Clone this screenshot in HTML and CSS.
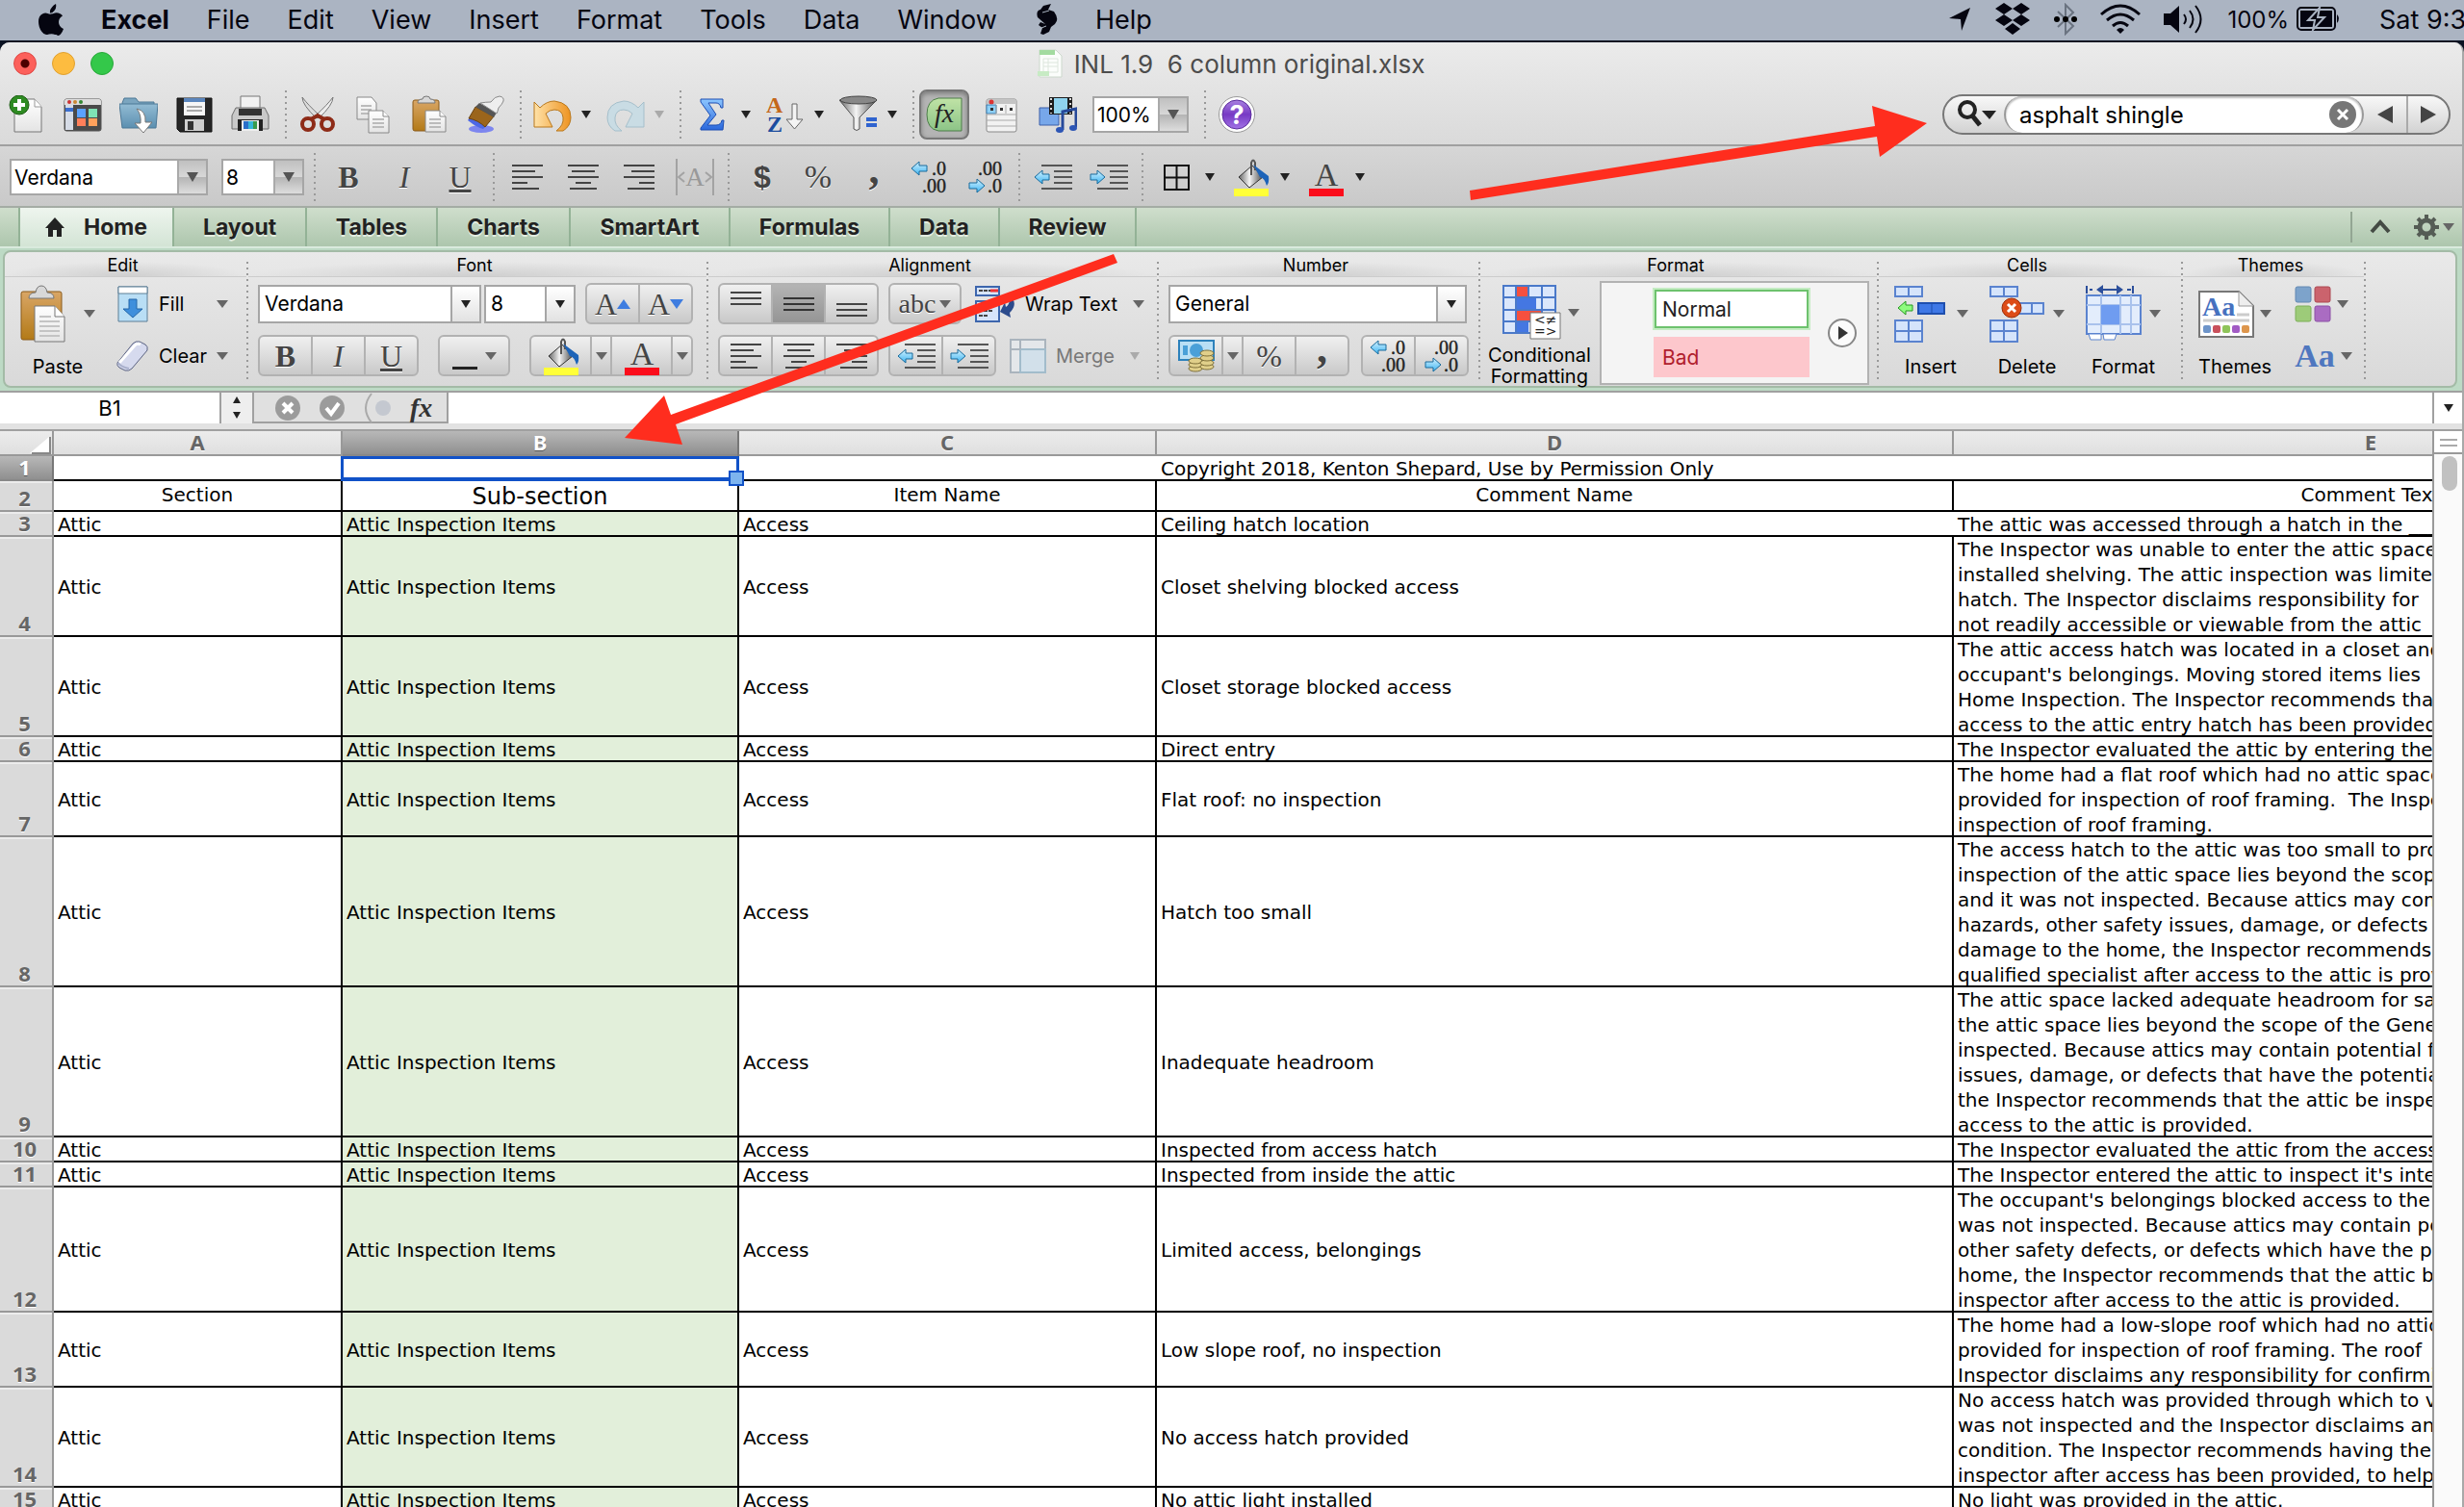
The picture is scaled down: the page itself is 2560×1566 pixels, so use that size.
FILE: index.html
```html
<!DOCTYPE html>
<html lang="en">
<head>
<meta charset="utf-8">
<title>INL 1.9  6 column original.xlsx</title>
<link rel="stylesheet" href="styles.css">
</head>
<body>
<svg class="defs" aria-hidden="true">
  <defs>
    <linearGradient id="g-page" x1="0" y1="0" x2="0" y2="1"><stop offset="0" stop-color="#fff"/><stop offset="1" stop-color="#e4e4e4"/></linearGradient>
    <linearGradient id="g-folder" x1="0" y1="0" x2="0" y2="1"><stop offset="0" stop-color="#93bcd4"/><stop offset="1" stop-color="#5b8fb0"/></linearGradient>
    <linearGradient id="g-board" x1="0" y1="0" x2="0" y2="1"><stop offset="0" stop-color="#d9a666"/><stop offset="1" stop-color="#b37a17"/></linearGradient>
    <linearGradient id="g-undo" x1="0" y1="0" x2="1" y2="0"><stop offset="0" stop-color="#ffe2a8"/><stop offset="1" stop-color="#ee9320"/></linearGradient>
    <linearGradient id="g-blue" x1="0" y1="0" x2="0" y2="1"><stop offset="0" stop-color="#8cc6ff"/><stop offset="1" stop-color="#2b68dc"/></linearGradient>
    <linearGradient id="g-metal" x1="0" y1="0" x2="1" y2="0"><stop offset="0" stop-color="#666"/><stop offset=".45" stop-color="#f4f4f4"/><stop offset="1" stop-color="#4c4c4c"/></linearGradient>
    <linearGradient id="g-green" x1="0" y1="0" x2="0" y2="1"><stop offset="0" stop-color="#c0e3a6"/><stop offset="1" stop-color="#8cc487"/></linearGradient>
    <linearGradient id="g-purple" x1="0" y1="0" x2="0" y2="1"><stop offset="0" stop-color="#a982e0"/><stop offset=".5" stop-color="#7739c4"/><stop offset="1" stop-color="#a274e6"/></linearGradient>
    <linearGradient id="g-arrow" x1="0" y1="0" x2="0" y2="1"><stop offset="0" stop-color="#d6f3ff"/><stop offset="1" stop-color="#3cb4f2"/></linearGradient>
  </defs>

  <symbol id="i-new" viewBox="0 0 40 40"><path d="M7 4h21l7 8v26H7z" fill="url(#g-page)" stroke="#777"/><path d="M28 4v8h7" fill="#fff" stroke="#999"/><circle cx="12" cy="10" r="10" fill="#2e8b22" stroke="#1d5c14"/><path d="M12 4v12M6 10h12" stroke="#fff" stroke-width="4"/></symbol>
  <symbol id="i-gallery" viewBox="0 0 40 40"><rect x="1" y="4" width="38" height="33" rx="2" fill="#4a4a4a" stroke="#555"/><path d="M1 10V6q0-2 2-2h34q2 0 2 2v4z" fill="#ddd"/><circle cx="6" cy="7" r="2" fill="#c33"/><circle cx="12" cy="7" r="2" fill="#c83"/><circle cx="18" cy="7" r="2" fill="#383"/><path d="M2 10h8v26H2z" fill="#d5dbe6"/><path d="M2 13h8v4H2z" fill="#3b6fd0"/><path d="M14 14h9v9h-9z" fill="#5ba2ff"/><path d="M26 14h9v9h-9z" fill="#7fe3b4"/><path d="M14 24h9v8h-9z" fill="#ff7f5a"/><path d="M26 24h9v8h-9z" fill="#ffa15c"/></symbol>
  <symbol id="i-open" viewBox="0 0 40 40"><path d="M3 8l2-5h12l3 4h16v6H3z" fill="#7ba5bf" stroke="#4c7896"/><path d="M0 9h40l-2 25H3z" fill="url(#g-folder)" stroke="#4c7896"/><path d="M18 14q10 2 9 14h7l-9 11-9-10h6q1-9-4-15z" fill="#fff" stroke="#777"/></symbol>
  <symbol id="i-save" viewBox="0 0 40 40"><path d="M2 3h36v35H5l-3-3z" fill="#262626" stroke="#111"/><path d="M9 3h22v18H9z" fill="#f6f6f6"/><path d="M9 3h22v4H9z" fill="#5b86bd"/><path d="M12 12h16M12 16h16" stroke="#aaa" stroke-width="2"/><path d="M10 25h20v12H10z" fill="#cfcfcf"/><path d="M13 27h6v9h-6z" fill="#333"/></symbol>
  <symbol id="i-print" viewBox="0 0 40 40"><path d="M10 1h20v14H10z" fill="#f2f2f2" stroke="#777"/><path d="M5 13h30l4 8v14H1V21z" fill="#c9c9c9" stroke="#6d6d6d"/><path d="M8 14h24v7H8z" fill="#333"/><path d="M7 25h26v12H7z" fill="#222"/><path d="M11 26h18v11H11z" fill="#eee"/><path d="M13 27h5v8h-5z" fill="#2a6fc9"/><path d="M18 27h5v8h-5z" fill="#35b5d8"/><path d="M23 27h4v8h-4z" fill="#3a9a4c"/></symbol>
  <symbol id="i-cut" viewBox="0 0 40 40"><path d="M4 2q0 8 15 22l3-3Q10 10 4 2z" fill="#ddd" stroke="#777"/><path d="M36 2q0 8-15 22l-3-3Q30 10 36 2z" fill="#eee" stroke="#777"/><ellipse cx="10" cy="30" rx="6" ry="6" fill="none" stroke="#8e2b17" stroke-width="4"/><ellipse cx="30" cy="30" rx="6" ry="6" fill="none" stroke="#8e2b17" stroke-width="4"/><path d="M13 25l7-4 7 4" fill="none" stroke="#8e2b17" stroke-width="4"/></symbol>
  <symbol id="i-copy" viewBox="0 0 40 40"><path d="M3 2h15l5 6v17H3z" fill="url(#g-page)" stroke="#888"/><path d="M7 11h11M7 15h11M7 19h8" stroke="#bbb" stroke-width="2"/><path d="M15 16h15l6 6v17H15z" fill="url(#g-page)" stroke="#888"/><path d="M30 16v6h6" fill="#fff" stroke="#888"/><path d="M19 25h12M19 29h12M19 33h12" stroke="#bbb" stroke-width="2"/></symbol>
  <symbol id="i-paste" viewBox="0 0 40 40"><rect x="3" y="5" width="27" height="32" rx="2" fill="url(#g-board)" stroke="#8a5a1a"/><path d="M8 8q0-4 5-4 0-3 4-3t4 3q5 0 5 4z" fill="#d8d8d8" stroke="#777"/><path d="M16 16h15l6 6v16H16z" fill="url(#g-page)" stroke="#888"/><path d="M31 16v6h6" fill="#fff" stroke="#888"/><path d="M20 25h12M20 29h12M20 33h12" stroke="#bbb" stroke-width="2"/></symbol>
  <symbol id="i-brush" viewBox="0 0 40 40"><ellipse cx="16" cy="35" rx="13" ry="4" fill="#7d86ef"/><path d="M2 26q10 8 16 9l4-4L6 20z" fill="#4d68e6"/><path d="M10 12l-7 12q10 2 17 9l9-11z" fill="#9b651c" stroke="#6b430e"/><path d="M10 12l4-4 18 10-3 5z" fill="#555"/><path d="M15 8q6-1 11-1 4-6 9-6 5 1 4 5-1 3-5 7-1 4-2 6z" fill="#eee" stroke="#888"/></symbol>
  <symbol id="i-undo" viewBox="0 0 40 40"><path d="M1 7l6 6Q14 6 22 6q17 2 17 17 0 9-8 14h-7q8-6 7-14-1-8-9-8-5 0-9 4l7 14H1z" fill="url(#g-undo)" stroke="#b9781c"/></symbol>
  <symbol id="i-redo" viewBox="0 0 40 40"><path d="M39 7l-6 6Q26 6 18 6 1 8 1 23q0 9 8 14h7q-8-6-7-14 1-8 9-8 5 0 9 4l-7 14h19z" fill="#c9dce4" stroke="#a5bfcb"/></symbol>
  <symbol id="i-sum" viewBox="0 0 40 40"><path d="M8 4h23v9h-2q-1-5-5-5h-8l8 12-9 11h9q5 0 6-5h2l-1 10H8v-2l10-13L8 7z" fill="url(#g-blue)" stroke="#1c4db2"/></symbol>
  <symbol id="i-filter" viewBox="0 0 40 40"><path d="M0 5l15 18v12q3 3 6 0V23L39 5z" fill="url(#g-metal)" stroke="#555"/><ellipse cx="20" cy="5" rx="19" ry="4" fill="#888" stroke="#444"/><path d="M28 23h11v4H28zM28 29h11v4H28z" fill="#2f63cf"/></symbol>
  <symbol id="i-toolbox" viewBox="0 0 40 40"><rect x="2" y="4" width="31" height="34" rx="2" fill="#f2f2f2" stroke="#888"/><path d="M2 9V6q0-2 2-2h27q2 0 2 2v3z" fill="#c4c4c4"/><circle cx="7" cy="7" r="2.500" fill="#d33"/><path d="M2 10h10v9H2z" fill="#8fd0f6" stroke="#3b7db0"/><path d="M12 10v9M22 10v9M2 20h31M2 26h31M2 32h31" stroke="#aaa"/><path d="M6 13h3v3H6zM16 13h3v3h-3zM26 13h3v3h-3z" fill="#333"/></symbol>
  <symbol id="i-media" viewBox="0 0 40 40"><path d="M1 13h20v18H1z" fill="#77a7ea" stroke="#3c5fa8"/><path d="M11 2h24v18H11z" fill="#1d1d1d"/><path d="M16 3h14v16H16z" fill="#8fd3ee"/><path d="M13 3v16M33 3v16" stroke="#ddd" stroke-width="2" stroke-dasharray="2 3"/><path d="M25 36V17l14-3v19" fill="none" stroke="#26499a" stroke-width="3"/><ellipse cx="22" cy="36" rx="4" ry="3" fill="#2c55b5"/><ellipse cx="36" cy="34" rx="4" ry="3" fill="#2c55b5"/></symbol>

  <symbol id="i-left" viewBox="0 0 32 32"><path d="M0 4h32M0 10h24M0 16h32M0 22h16M0 28h28" stroke="#444" stroke-width="2"/></symbol>
  <symbol id="i-center" viewBox="0 0 32 32"><path d="M0 4h32M4 10h24M0 16h32M8 22h16M2 28h28" stroke="#444" stroke-width="2"/></symbol>
  <symbol id="i-right" viewBox="0 0 32 32"><path d="M0 4h32M8 10h24M0 16h32M16 22h16M4 28h28" stroke="#444" stroke-width="2"/></symbol>
  <symbol id="i-top" viewBox="0 0 32 32"><path d="M0 4h32M0 10h32M0 16h32" stroke="#444" stroke-width="2"/></symbol>
  <symbol id="i-middle" viewBox="0 0 32 32"><path d="M0 10h32M0 16h32M0 22h32" stroke="#333" stroke-width="2"/></symbol>
  <symbol id="i-bottom" viewBox="0 0 32 32"><path d="M0 16h32M0 22h32M0 28h32" stroke="#444" stroke-width="2"/></symbol>
  <symbol id="i-outdent" viewBox="0 0 40 32"><path d="M8 4h32M21 10h19M21 16h19M21 22h19M8 28h32" stroke="#555" stroke-width="2"/><path d="M1 16l8-7v4h7v6H9v4z" fill="url(#g-arrow)" stroke="#186a9c"/></symbol>
  <symbol id="i-indent" viewBox="0 0 40 32"><path d="M8 4h32M21 10h19M21 16h19M21 22h19M8 28h32" stroke="#555" stroke-width="2"/><path d="M16 16L8 9v4H1v6h7v4z" fill="url(#g-arrow)" stroke="#186a9c"/></symbol>
  <symbol id="i-borders" viewBox="0 0 40 40"><path d="M8 8h25v25H8zM20.500 8v25M8 20.500h25" fill="none" stroke="#111" stroke-width="2"/></symbol>
  <symbol id="i-bucket" viewBox="0 0 40 40"><path d="M2 32h36v8H2z" fill="#ffff38"/><path d="M7 20L21 8l11 12-14 11z" fill="url(#g-metal)" stroke="#333"/><path d="M20 18V5q2-5 4 0v8" fill="none" stroke="#555" stroke-width="2"/><path d="M22 7l16 12q1 7-2 10-2-8-7-9z" fill="#1c63b8"/></symbol>

  <symbol id="i-clip" viewBox="0 0 48 60"><rect x="1" y="7" width="42" height="50" rx="2" fill="url(#g-board)" stroke="#8a5a1a"/><path d="M9 14q0-6 7-6 1-7 6-7t6 7q7 0 7 6z" fill="#d8d8d8" stroke="#777"/><path d="M15 22h21l10 11v26H15z" fill="url(#g-page)" stroke="#777"/><path d="M36 22v11h10" fill="#fff" stroke="#777"/><path d="M20 33h12M20 38h21M20 43h21M20 48h21M20 53h21" stroke="#c4c4c4" stroke-width="2"/></symbol>
  <symbol id="i-fill" viewBox="0 0 34 38"><path d="M2 1h30v36H2z" fill="#b9def5" stroke="#5c7f96"/><path d="M2 1h30v7H2z" fill="#fff" stroke="#5c7f96"/><path d="M13 14h8v10h6L17 33 7 24h6z" fill="#3f8fdc" stroke="#2566a8"/></symbol>
  <symbol id="i-eraser" viewBox="0 0 34 38"><path d="M1 26L17 6q3-3 7-2l6 3q3 2 2 6L16 32q-3 3-7 2l-6-3q-3-2-2-5z" fill="#d6daee" stroke="#5b6381"/><path d="M3 26L19 8q3-3 6-1" fill="none" stroke="#fff" stroke-width="3"/><path d="M2 26q2 4 11 6" fill="none" stroke="#a9b0cc" stroke-width="2"/></symbol>
  <symbol id="i-wrap" viewBox="0 0 42 40"><path d="M1 2h24v9H1zM1 17h24v21H1z" fill="#d7e5fa" stroke="#3d66ad" stroke-width="2"/><path d="M4 6h12M4 27h14M4 32h10" stroke="#444" stroke-width="2" stroke-dasharray="4 1"/><path d="M16 6h8" stroke="#e33" stroke-width="3"/><path d="M33 9q14 9 3 20l1 5-11-6 5-10 1 5q7-5 1-14z" fill="#2c4b8c"/></symbol>
  <symbol id="i-merge" viewBox="0 0 38 38"><path d="M1 2h36v34H1z" fill="#e4e7ea" stroke="#aab4bd" stroke-width="2"/><path d="M11 12h26v24H11z" fill="#d2e0ea" stroke="#a2bccb" stroke-width="2"/><path d="M11 2v10M1 12h10" stroke="#aab4bd" stroke-width="2"/></symbol>
  <symbol id="i-money" viewBox="0 0 40 36"><path d="M2 2h36v20H2z" fill="#b9dff5" stroke="#2c81bb" stroke-width="2"/><circle cx="20" cy="12" r="7" fill="#4aa0d8"/><path d="M6 7h5v10H6z" fill="#4aa0d8"/><g fill="#e0cf8a" stroke="#80713a"><ellipse cx="19" cy="31" rx="7" ry="3"/><ellipse cx="19" cy="27" rx="7" ry="3"/><ellipse cx="19" cy="23" rx="7" ry="3"/><ellipse cx="31" cy="29" rx="7" ry="3"/><ellipse cx="31" cy="25" rx="7" ry="3"/><ellipse cx="31" cy="20" rx="7" ry="3"/><ellipse cx="31" cy="15" rx="7" ry="3"/></g></symbol>
  <symbol id="i-insert" viewBox="0 0 58 60"><path d="M2 2h28v10H2zM2 37h28v22H2z" fill="#d5e4fb" stroke="#5a83cf" stroke-width="2"/><path d="M16 2v10M16 37v22M2 48h28" stroke="#5a83cf" stroke-width="2"/><path d="M26 19h27v11H26z" fill="#3f78e6" stroke="#1f4fae" stroke-width="2"/><path d="M40 19v11" stroke="#1f4fae"/><path d="M5 24l8-7v4h7v6h-7v4z" fill="#8dfb7d" stroke="#279a22"/></symbol>
  <symbol id="i-delete" viewBox="0 0 58 60"><path d="M1 2h28v10H1zM1 37h28v22H1zM30 19h26v11H30z" fill="#d5e4fb" stroke="#5a83cf" stroke-width="2"/><path d="M15 2v10M15 37v22M1 48h28M44 19v11" stroke="#5a83cf" stroke-width="2"/><circle cx="23" cy="24" r="10" fill="#dd4c17" stroke="#9b2c06"/><path d="M19 20l8 8M27 20l-8 8" stroke="#fff" stroke-width="3"/></symbol>
  <symbol id="i-format" viewBox="0 0 58 60"><path d="M1 11h56v40H1z" fill="#e3edfc" stroke="#5a83cf" stroke-width="2"/><path d="M16 11v40M36 11v40M47 11v40M1 21h56M1 41h56" stroke="#a9c2ec" stroke-width="2"/><path d="M16 21h19v20H16z" fill="#6f9cf0"/><path d="M3 51h13v6H5zM18 51h14l-2 6H19z" fill="#fff" stroke="#5a83cf"/><path d="M1 1v8M49 1v8M4 5h3M43 5h4" stroke="#2c4f9b" stroke-width="2"/><path d="M11 5l7-5v4h14V0l7 5-7 5V6H18v4z" fill="#2c4f9b"/></symbol>
  <symbol id="i-palette" viewBox="0 0 38 38"><rect x="1" y="1" width="16" height="16" rx="2" fill="#7da3cb" stroke="#6288b2"/><rect x="21" y="1" width="16" height="16" rx="2" fill="#cb636d" stroke="#ac4852"/><rect x="1" y="21" width="16" height="16" rx="2" fill="#9dcb79" stroke="#7daf58"/><rect x="21" y="21" width="16" height="16" rx="2" fill="#aa6cc2" stroke="#8c50a6"/></symbol>
</svg>

<header class="menubar">
  <nav class="menus">
    <a href="#" class="apple" aria-label="Apple"><svg width="26" height="34" viewBox="0 0 26 34"><path d="M18 1q1 4-1.500 7T12 10.500Q11.500 7 14 4.500 15.500 2 18 1zM13 11.500q2 0 4-1t6 1q1.500 1 2 2-4 2-4 6.500t5 7q-1 3-3 5.500T18.500 33q-1.500 0-3-.5t-4.500 0q-2 .5-3 .5-2.500 0-4.500-3Q0 25.500 0 19.500q0-6 4-8 3-1.500 5.500-.5t3.500.5z" fill="#050510"/></svg></a>
    <a href="#" class="app">Excel</a><a href="#">File</a><a href="#">Edit</a><a href="#">View</a><a href="#">Insert</a><a href="#">Format</a><a href="#">Tools</a><a href="#">Data</a><a href="#">Window</a>
    <a href="#" aria-label="Scripts"><svg width="24" height="34" viewBox="0 0 24 34"><path d="M17 1l-3 6 6 2q6 8 1 13l-4 3-2 5-6 3-3-1 2-6-4-3 2-3 5 2-8-7q-2-7 3-8l3-4z" fill="#050510"/><path d="M15 8L8 10M12 24l-5 2" stroke="#aab4c2" stroke-width="1"/></svg></a>
    <a href="#">Help</a>
  </nav>
  <div class="status">
    <svg width="24" height="26" viewBox="0 0 24 26"><path d="M23 1L14 25l-1-12-12-1z" fill="#050510"/></svg>
    <svg width="38" height="34" viewBox="0 0 38 34"><path d="M10 0l9 6-9 6-9-6zM28 0l9 6-9 6-9-6zM10 12l9 6-9 6-9-6zM28 12l9 6-9 6-9-6zM19 21l8 6-8 6-8-6z" fill="#050510"/></svg>
    <svg width="24" height="34" viewBox="0 0 24 34"><path d="M4 9l16 15-8 8V2l8 8L4 25" fill="none" stroke="#6a7380" stroke-width="2"/><circle cx="3" cy="17" r="3"/><circle cx="12" cy="17" r="3"/><circle cx="21" cy="17" r="3"/></svg>
    <svg width="42" height="32" viewBox="0 0 42 32"><path d="M1 11q20-18 40 0M7 17q14-12 28 0M13 23q8-7 16 0" fill="none" stroke="#050510" stroke-width="3"/><path d="M21 31l-4-4q4-4 8 0z" fill="#050510"/></svg>
    <svg width="42" height="32" viewBox="0 0 42 32"><path d="M0 10h7l9-8v28l-9-8H0z" fill="#050510"/><path d="M21 11q4 5 0 10M27 7q7 9 0 18M33 2q11 14 0 28" fill="none" stroke="#050510" stroke-width="2"/></svg>
    <span class="battery">100%<svg width="46" height="26" viewBox="0 0 46 26"><rect x="1" y="1" width="39" height="23" rx="4" fill="none" stroke="#050510" stroke-width="2"/><path d="M4 4h33v17H4z" fill="#050510"/><path d="M42 8q4 4 0 9z" fill="#050510"/><path d="M24 1L12 14h7l-2 10 12-13h-7z" fill="#050510" stroke="#aab4c2" stroke-width="2"/></svg></span>
    <span class="clock">Sat 9:3</span>
  </div>
</header>

<main class="window">
  <div class="chrome">
    <div class="titlebar">
      <div class="lights"><button class="light close" aria-label="Close"></button><button class="light mini" aria-label="Minimise"></button><button class="light full" aria-label="Zoom"></button></div>
      <h1 class="title"><svg width="26" height="30" viewBox="0 0 26 30"><path d="M2 1h17l6 6v22H2z" fill="#fbfdfb" stroke="#ccd8cc"/><path d="M2 1h16v5H2z" fill="#a3dba0"/><path d="M6 10h15v14H6zM6 14h15M6 18h15M11 10v14" fill="none" stroke="#dde6dd"/><path d="M0 23h12v5H0z" fill="#c7ebc4"/></svg>INL 1.9&nbsp; 6 column original.xlsx</h1>
    </div>
    <div class="toolbar">
      <div class="tg first">
        <button aria-label="New"><svg class="ic"><use href="#i-new"/></svg></button>
        <button aria-label="Gallery"><svg class="ic"><use href="#i-gallery"/></svg></button>
        <button aria-label="Open"><svg class="ic"><use href="#i-open"/></svg></button>
        <button aria-label="Save"><svg class="ic"><use href="#i-save"/></svg></button>
        <button aria-label="Print"><svg class="ic"><use href="#i-print"/></svg></button>
      </div>
      <div class="tg">
        <button aria-label="Cut"><svg class="ic"><use href="#i-cut"/></svg></button>
        <button aria-label="Copy"><svg class="ic"><use href="#i-copy"/></svg></button>
        <button aria-label="Paste"><svg class="ic"><use href="#i-paste"/></svg></button>
        <button aria-label="Format painter"><svg class="ic"><use href="#i-brush"/></svg></button>
      </div>
      <div class="tg tight">
        <button class="split" aria-label="Undo"><svg class="ic"><use href="#i-undo"/></svg><i class="caret"></i></button>
        <button class="split" aria-label="Redo" disabled><svg class="ic"><use href="#i-redo"/></svg><i class="caret dim"></i></button>
      </div>
      <div class="tg tight">
        <button class="split" aria-label="AutoSum"><svg class="ic"><use href="#i-sum"/></svg><i class="caret"></i></button>
        <button class="split" aria-label="Sort"><svg class="ic" viewBox="0 0 40 40"><text x="0" y="18" class="az a">A</text><text x="1" y="38" class="az z">Z</text><path d="M27 9h5v16h6l-8.500 10-8.500-10h6z" fill="#f4f4f4" stroke="#666"/></svg><i class="caret"></i></button>
        <button class="split" aria-label="Filter"><svg class="ic"><use href="#i-filter"/></svg><i class="caret"></i></button>
      </div>
      <div class="tg tight near">
        <button class="pressed" aria-label="Formula builder"><svg class="ic" viewBox="0 0 40 40"><path d="M14 3h24v34H14Q2 35 2 20T14 3z" fill="url(#g-green)" stroke="#4d7d49"/><text x="10" y="28" class="fxt">fx</text></svg></button>
        <button aria-label="Toolbox"><svg class="ic"><use href="#i-toolbox"/></svg></button>
        <button aria-label="Media browser"><svg class="ic"><use href="#i-media"/></svg></button>
        <div class="combo old zoom"><select aria-label="Zoom"><option>100%</option></select><span class="drop"><i class="caret"></i></span></div>
      </div>
      <div class="tg last"><button aria-label="Help"><svg class="ic" viewBox="0 0 40 40"><circle cx="20" cy="20" r="18.500" fill="#fff" stroke="#999"/><circle cx="20" cy="20" r="15" fill="url(#g-purple)" stroke="#5a2a9c"/><text x="20" y="30" class="qm">?</text></svg></button></div>
      <div class="search">
        <button class="lens" aria-label="Search options"><svg width="44" height="32" viewBox="0 0 44 32"><circle cx="12" cy="11" r="8" fill="none" stroke="#222" stroke-width="4"/><path d="M17 17l8 10" stroke="#222" stroke-width="5"/><path d="M27 12h15l-7 9z" fill="#222"/></svg></button>
        <div class="field"><input type="text" value="asphalt shingle" aria-label="Search in sheet"><button aria-label="Clear search"><svg width="28" height="28" viewBox="0 0 28 28"><circle cx="14" cy="14" r="14" fill="#777"/><path d="M9 9l10 10M19 9L9 19" stroke="#fff" stroke-width="3"/></svg></button></div>
        <button class="step" aria-label="Previous"><svg width="16" height="18" viewBox="0 0 16 18"><path d="M16 0v18L0 9z" fill="#444"/></svg></button>
        <button class="step" aria-label="Next"><svg width="16" height="18" viewBox="0 0 16 18"><path d="M0 0v18l16-9z" fill="#444"/></svg></button>
      </div>
    </div>
  </div>

  <div class="formatbar">
    <div class="fg first">
      <div class="combo old font"><select aria-label="Font"><option>Verdana</option></select><span class="drop"><i class="caret"></i></span></div>
      <div class="combo old size"><select aria-label="Font size"><option>8</option></select><span class="drop"><i class="caret"></i></span></div>
    </div>
    <div class="fg"><button class="glyph"><b>B</b></button><button class="glyph"><em>I</em></button><button class="glyph"><u>U</u></button></div>
    <div class="fg">
      <button aria-label="Align left"><svg class="ln"><use href="#i-left"/></svg></button>
      <button aria-label="Center"><svg class="ln"><use href="#i-center"/></svg></button>
      <button aria-label="Align right"><svg class="ln"><use href="#i-right"/></svg></button>
      <button aria-label="Distribute" disabled><svg class="ic" viewBox="0 0 40 40"><path d="M1 1v38M39 1v38" stroke="#a3a3a3" stroke-width="2"/><text x="20" y="29" class="fit">A</text><path d="M9 15l-6 5 6 5M31 15l6 5-6 5" fill="none" stroke="#a3a3a3" stroke-width="2"/></svg></button>
    </div>
    <div class="fg">
      <button class="glyph"><b class="sans">$</b></button><button class="glyph pct">%</button><button class="glyph comma"><b>,</b></button>
      <button aria-label="Increase decimal"><svg class="wd" viewBox="0 0 40 36"><path d="M1 9l8-7v4h8v6H9v4z" fill="url(#g-arrow)" stroke="#186a9c"/><text x="37" y="16" class="dec">.0</text><text x="37" y="34" class="dec">.00</text></svg></button>
      <button aria-label="Decrease decimal"><svg class="wd" viewBox="0 0 40 36"><path d="M19 27l-8-7v4H3v6h8v4z" fill="url(#g-arrow)" stroke="#186a9c"/><text x="37" y="16" class="dec">.00</text><text x="37" y="34" class="dec">.0</text></svg></button>
    </div>
    <div class="fg">
      <button aria-label="Decrease indent"><svg class="wd"><use href="#i-outdent"/></svg></button>
      <button aria-label="Increase indent"><svg class="wd"><use href="#i-indent"/></svg></button>
    </div>
    <div class="fg last">
      <button class="split" aria-label="Borders"><svg class="ic"><use href="#i-borders"/></svg><i class="caret"></i></button>
      <button class="split" aria-label="Fill colour"><svg class="ic"><use href="#i-bucket"/></svg><i class="caret"></i></button>
      <button class="split" aria-label="Font colour"><svg class="ic" viewBox="0 0 40 40"><path d="M2 32h36v8H2z" fill="#fb0d1b"/><text x="20" y="29" class="ca-a">A</text></svg><i class="caret"></i></button>
    </div>
  </div>

  <nav class="tabs">
    <span class="edge"></span>
    <a href="#" class="on"><svg width="20" height="20" viewBox="0 0 20 20"><path d="M10 0l10 11h-3v9h-5v-7H8v7H3v-9H0z" fill="#222"/></svg>Home</a>
    <a href="#">Layout</a><a href="#">Tables</a><a href="#">Charts</a><a href="#">SmartArt</a><a href="#">Formulas</a><a href="#">Data</a><a href="#">Review</a>
    <span class="tools">
      <button aria-label="Collapse ribbon"><svg width="22" height="16" viewBox="0 0 22 16"><path d="M2 13l9-10 9 10" fill="none" stroke="#444b44" stroke-width="4"/></svg></button>
      <button class="gear" aria-label="Ribbon settings"><svg width="26" height="26" viewBox="0 0 26 26"><circle cx="13" cy="13" r="7" fill="none" stroke="#555c55" stroke-width="5"/><path d="M13 0v5M13 21v5M0 13h5M21 13h5M4 4l4 4M18 18l4 4M22 4l-4 4M8 18l-4 4" stroke="#555c55" stroke-width="4"/></svg><i class="caret soft"></i></button>
    </span>
  </nav>

  <section class="ribbon">
    <div class="groups">
      <div class="rg"><h2>Edit</h2>
        <div class="side edit">
          <button class="big"><span class="pic"><svg width="48" height="60"><use href="#i-clip"/></svg><i class="caret soft"></i></span>Paste</button>
          <div class="stack">
            <button class="row"><svg width="34" height="38"><use href="#i-fill"/></svg>Fill<i class="caret soft"></i></button>
            <button class="row"><svg width="34" height="38"><use href="#i-eraser"/></svg>Clear<i class="caret soft"></i></button>
          </div>
        </div>
      </div>
      <div class="rg"><h2>Font</h2>
        <div class="body">
          <div class="line narrow">
            <div class="combo name"><select aria-label="Font name"><option>Verdana</option></select><span class="drop"><i class="caret"></i></span></div>
            <div class="combo pts"><select aria-label="Font points"><option>8</option></select><span class="drop"><i class="caret"></i></span></div>
            <div class="seg push"><button class="glyph">A<svg width="14" height="10" viewBox="0 0 14 10"><path d="M7 0l7 10H0z" fill="#3f7de0"/></svg></button><button class="glyph">A<svg width="14" height="10" viewBox="0 0 14 10"><path d="M0 0h14L7 10z" fill="#3f7de0"/></svg></button></div>
          </div>
          <div class="line spread">
            <div class="seg"><button class="glyph"><b>B</b></button><button class="glyph"><em>I</em></button><button class="glyph"><u>U</u></button></div>
            <div class="seg"><button class="ul" aria-label="Border style"><svg width="26" height="4"><path d="M0 0h26v3H0z" fill="#222"/></svg><i class="caret soft"></i></button></div>
            <div class="seg"><button class="wide" aria-label="Fill"><svg class="ic"><use href="#i-bucket"/></svg></button><button class="thin" aria-label="More fills"><i class="caret soft"></i></button><button class="wide" aria-label="Colour"><svg class="ic" viewBox="0 0 40 40"><path d="M2 32h36v8H2z" fill="#fb0d1b"/><text x="20" y="29" class="ca-a">A</text></svg></button><button class="thin" aria-label="More colours"><i class="caret soft"></i></button></div>
          </div>
        </div>
      </div>
      <div class="rg"><h2>Alignment</h2>
        <div class="body">
          <div class="line">
            <div class="seg"><button aria-label="Top"><svg class="ln"><use href="#i-top"/></svg></button><button class="down" aria-label="Middle"><svg class="ln"><use href="#i-middle"/></svg></button><button aria-label="Bottom"><svg class="ln"><use href="#i-bottom"/></svg></button></div>
            <div class="seg"><button class="glyph abc">abc<i class="caret soft"></i></button></div>
            <button class="row"><svg width="42" height="40"><use href="#i-wrap"/></svg>Wrap Text<i class="caret soft"></i></button>
          </div>
          <div class="line">
            <div class="seg"><button aria-label="Left"><svg class="ln"><use href="#i-left"/></svg></button><button aria-label="Centre"><svg class="ln"><use href="#i-center"/></svg></button><button aria-label="Right"><svg class="ln"><use href="#i-right"/></svg></button></div>
            <div class="seg"><button aria-label="Outdent"><svg class="wd"><use href="#i-outdent"/></svg></button><button aria-label="Indent"><svg class="wd"><use href="#i-indent"/></svg></button></div>
            <button class="row off" disabled><svg width="38" height="38"><use href="#i-merge"/></svg>Merge<i class="caret dim"></i></button>
          </div>
        </div>
      </div>
      <div class="rg"><h2>Number</h2>
        <div class="body">
          <div class="line"><div class="combo num"><select aria-label="Number format"><option>General</option></select><span class="drop"><i class="caret"></i></span></div></div>
          <div class="line spread">
            <div class="seg"><button aria-label="Currency"><svg class="wd"><use href="#i-money"/></svg></button><button class="thin" aria-label="More currencies"><i class="caret soft"></i></button><button class="glyph">%</button><button class="glyph comma"><b>,</b></button></div>
            <div class="seg"><button aria-label="More decimals"><svg class="wd" viewBox="0 0 40 36"><path d="M1 9l8-7v4h8v6H9v4z" fill="url(#g-arrow)" stroke="#186a9c"/><text x="37" y="16" class="dec">.0</text><text x="37" y="34" class="dec">.00</text></svg></button><button aria-label="Fewer decimals"><svg class="wd" viewBox="0 0 40 36"><path d="M19 27l-8-7v4H3v6h8v4z" fill="url(#g-arrow)" stroke="#186a9c"/><text x="37" y="16" class="dec">.00</text><text x="37" y="34" class="dec">.0</text></svg></button></div>
          </div>
        </div>
      </div>
      <div class="rg"><h2>Format</h2>
        <div class="side styles">
          <button class="big two"><span class="pic"><svg width="62" height="58" viewBox="0 0 62 58"><path d="M1 1h54v49H1z" fill="#dbe7fb"/><path d="M14 1h13v12H14zM14 26h27v12H14z" fill="#f5503f"/><path d="M14 14h21v12H14zM14 38h13v12H14z" fill="#4477e2"/><path d="M1 1h54v49H1zM1 13h54M1 26h54M1 38h54M14 1v49M27 1v12M41 1v49" fill="none" stroke="#4a79c9" stroke-width="2"/><path d="M29 29h31v27H29z" fill="#fff" stroke="#777"/><text x="33" y="41" class="cmp">&lt;≠</text><text x="33" y="53" class="cmp">=&gt;</text></svg><i class="caret soft"></i></span>Conditional<br>Formatting</button>
          <div class="gallery">
            <div class="cards"><button class="card normal">Normal</button><button class="card bad">Bad</button></div>
            <button aria-label="More styles"><svg width="32" height="32" viewBox="0 0 32 32"><circle cx="16" cy="16" r="14" fill="#fbfbfb" stroke="#888" stroke-width="2"/><path d="M12 9v14l10-7z" fill="#333"/></svg></button>
          </div>
        </div>
      </div>
      <div class="rg"><h2>Cells</h2>
        <div class="side cells">
          <button class="big"><span class="pic"><svg width="58" height="60"><use href="#i-insert"/></svg><i class="caret soft"></i></span>Insert</button>
          <button class="big"><span class="pic"><svg width="58" height="60"><use href="#i-delete"/></svg><i class="caret soft"></i></span>Delete</button>
          <button class="big"><span class="pic"><svg width="58" height="60"><use href="#i-format"/></svg><i class="caret soft"></i></span>Format</button>
        </div>
      </div>
      <div class="rg"><h2>Themes</h2>
        <div class="side theme">
          <button class="big"><span class="pic"><svg width="58" height="60" viewBox="0 0 58 60"><path d="M1 7h41l15 15v32H1z" fill="#fff" stroke="#777" stroke-width="2"/><path d="M42 7v15h15" fill="#eee" stroke="#999"/><text x="4" y="32" class="aat">Aa</text><path d="M40 31h13M5 37h48" stroke="#ccc" stroke-width="3"/><rect x="5" y="42" width="8" height="8" rx="2" fill="#6d94c9"/><rect x="15" y="42" width="8" height="8" rx="2" fill="#c9515c"/><rect x="25" y="42" width="8" height="8" rx="2" fill="#8fc45a"/><rect x="35" y="42" width="8" height="8" rx="2" fill="#a25bc4"/><rect x="45" y="42" width="8" height="8" rx="2" fill="#dd964d"/></svg><i class="caret soft"></i></span>Themes</button>
          <div class="stack">
            <button class="row" aria-label="Theme colours"><svg width="38" height="38"><use href="#i-palette"/></svg><i class="caret soft"></i></button>
            <button class="row aa">Aa<i class="caret soft"></i></button>
          </div>
        </div>
      </div>
    </div>
  </section>

  <div class="formula">
    <input class="cellref" type="text" value="B1" aria-label="Name box">
    <button class="spin" aria-label="Names"><svg width="12" height="24" viewBox="0 0 12 24"><path d="M6 0l4 7H2zM6 23l4-7H2z" fill="#222"/></svg></button>
    <div class="fbtns">
      <button aria-label="Cancel"><svg width="26" height="26" viewBox="0 0 26 26"><circle cx="13" cy="13" r="13" fill="#9b9b9b"/><path d="M8 8l10 10M18 8L8 18" stroke="#fff" stroke-width="4"/></svg></button>
      <button aria-label="Accept"><svg width="26" height="26" viewBox="0 0 26 26"><circle cx="13" cy="13" r="13" fill="#9b9b9b"/><path d="M7 13l5 6 8-11" fill="none" stroke="#fff" stroke-width="4"/></svg></button>
      <span class="knob"><svg width="28" height="32" viewBox="0 0 28 32"><path d="M8 1Q-4 16 8 31" fill="none" stroke="#aaa" stroke-width="2"/><circle cx="20" cy="16" r="8" fill="#c4c8d0"/></svg></span>
      <button class="fx">fx</button>
    </div>
    <input class="expr" type="text" aria-label="Formula">
    <button class="expand" aria-label="Expand formula bar"><i class="caret"></i></button>
  </div>

  <section class="sheet">
    <div class="grid">
      <table>
        <colgroup><col class="c0"><col class="ca"><col class="cb"><col class="cc"><col class="cd"><col class="ce"></colgroup>
        <thead><tr><th class="corner"><svg width="22" height="18" viewBox="0 0 22 18"><path d="M20 0v17H0z" fill="#fff"/><path d="M21 0v17H2" fill="none" stroke="#888" stroke-width="2"/></svg></th><th>A</th><th class="sel">B</th><th>C</th><th>D</th><th>E</th></tr></thead>
        <tbody>
          <tr class="free"><th class="sel">1</th><td></td><td class="active"></td><td></td><td>Copyright 2018, Kenton Shepard, Use by Permission Only</td><td></td></tr>
          <tr class="heads"><th>2</th><td>Section</td><td class="large">Sub-section</td><td>Item Name</td><td>Comment Name</td><td>Comment Text</td></tr>
          <tr class="spill"><th>3</th><td>Attic</td><td>Attic Inspection Items</td><td>Access</td><td>Ceiling hatch location</td><td>The attic was accessed through a hatch in the ________</td></tr>
          <tr><th>4</th><td>Attic</td><td>Attic Inspection Items</td><td>Access</td><td>Closet shelving blocked access</td><td>The Inspector was unable to enter the attic space<br>installed shelving. The attic inspection was limited<br>hatch. The Inspector disclaims responsibility for<br>not readily accessible or viewable from the attic</td></tr>
          <tr><th>5</th><td>Attic</td><td>Attic Inspection Items</td><td>Access</td><td>Closet storage blocked access</td><td>The attic access hatch was located in a closet and<br>occupant's belongings. Moving stored items lies<br>Home Inspection. The Inspector recommends that<br>access to the attic entry hatch has been provided</td></tr>
          <tr><th>6</th><td>Attic</td><td>Attic Inspection Items</td><td>Access</td><td>Direct entry</td><td>The Inspector evaluated the attic by entering the</td></tr>
          <tr><th>7</th><td>Attic</td><td>Attic Inspection Items</td><td>Access</td><td>Flat roof: no inspection</td><td>The home had a flat roof which had no attic space<br>provided for inspection of roof framing.&nbsp; The Inspector<br>inspection of roof framing.</td></tr>
          <tr><th>8</th><td>Attic</td><td>Attic Inspection Items</td><td>Access</td><td>Hatch too small</td><td>The access hatch to the attic was too small to provide<br>inspection of the attic space lies beyond the scope<br>and it was not inspected. Because attics may contain<br>hazards, other safety issues, damage, or defects<br>damage to the home, the Inspector recommends<br>qualified specialist after access to the attic is provided.</td></tr>
          <tr><th>9</th><td>Attic</td><td>Attic Inspection Items</td><td>Access</td><td>Inadequate headroom</td><td>The attic space lacked adequate headroom for safe<br>the attic space lies beyond the scope of the General<br>inspected. Because attics may contain potential fire<br>issues, damage, or defects that have the potential<br>the Inspector recommends that the attic be inspected<br>access to the attic is provided.</td></tr>
          <tr><th>10</th><td>Attic</td><td>Attic Inspection Items</td><td>Access</td><td>Inspected from access hatch</td><td>The Inspector evaluated the attic from the access</td></tr>
          <tr><th>11</th><td>Attic</td><td>Attic Inspection Items</td><td>Access</td><td>Inspected from inside the attic</td><td>The Inspector entered the attic to inspect it's interior</td></tr>
          <tr><th>12</th><td>Attic</td><td>Attic Inspection Items</td><td>Access</td><td>Limited access, belongings</td><td>The occupant's belongings blocked access to the<br>was not inspected. Because attics may contain potential<br>other safety defects, or defects which have the potential<br>home, the Inspector recommends that the attic be<br>inspector after access to the attic is provided.</td></tr>
          <tr><th>13</th><td>Attic</td><td>Attic Inspection Items</td><td>Access</td><td>Low slope roof, no inspection</td><td>The home had a low-slope roof which had no attic<br>provided for inspection of roof framing. The roof<br>Inspector disclaims any responsibility for confirming</td></tr>
          <tr><th>14</th><td>Attic</td><td>Attic Inspection Items</td><td>Access</td><td>No access hatch provided</td><td>No access hatch was provided through which to view<br>was not inspected and the Inspector disclaims any<br>condition. The Inspector recommends having the<br>inspector after access has been provided, to help</td></tr>
          <tr><th>15</th><td>Attic</td><td>Attic Inspection Items</td><td>Access</td><td>No attic light installed</td><td>No light was provided in the attic.</td></tr>
        </tbody>
      </table>
    </div>
    <div class="vscroll"><span class="splitter"></span><span class="track"><span class="thumb"></span></span></div>
  </section>
</main>

<svg class="notes" width="2560" height="500" viewBox="0 0 2560 500" aria-hidden="true"><path d="M1527 198L1948 131 1945 110 2002 128 1953 163 1950 142 1528 208zM1157 264L697 431 690 411 649 455 709 462 702 441 1161 273z" fill="#ff2d1e"/></svg>
</body>
</html>
```
FILE: styles.css
```css
* { box-sizing: border-box; }
body { margin: 0; height: 100vh; overflow: hidden; display: flex; flex-direction: column; position: relative; background: #0a1222; color: #000; font-family: Inter, "Liberation Sans", sans-serif; font-size: 20px; }
.defs { position: absolute; width: 0; height: 0; }
svg { display: block; flex: none; }
a { color: inherit; text-decoration: none; }
button { appearance: none; background: none; border: 0; margin: 0; padding: 0; font: inherit; color: inherit; display: flex; align-items: center; justify-content: center; }
input, select { appearance: none; border: 0; margin: 0; padding: 0; font: inherit; color: #000; background: none; min-width: 0; border-radius: 0; }
h1, h2 { margin: 0; font-weight: 400; }
.ic { width: 40px; height: 40px; }
.ln { width: 32px; height: 32px; }
.wd { width: 40px; height: 36px; }
.caret { flex: none; width: 0; height: 0; border: 5px solid transparent; border-top: 8px solid #222; border-bottom: 0; }
.caret.soft { border-top-color: #666; border-left-width: 6px; border-right-width: 6px; }
.caret.dim { border-top-color: #aaa; }

/* letters inside icons */
svg text { font-family: "Liberation Serif", serif; }
.az { font-size: 24px; font-weight: 700; }
.a { fill: #c4671a; }
.z { fill: #1c4d9e; }
.fxt { font-size: 28px; font-style: italic; fill: #222; }
svg .qm { font: 700 27px Inter, sans-serif; fill: #fff; text-anchor: middle; }
.fit { font-size: 27px; fill: #999; text-anchor: middle; }
.dec { font-size: 20px; fill: #222; stroke: #222; stroke-width: .4; text-anchor: end; }
.ca-a { font-size: 34px; fill: #444; text-anchor: middle; }
svg .cmp { font: 14px "DejaVu Sans", sans-serif; fill: #222; }
.aat { font-size: 28px; font-weight: 700; fill: #4671bf; }

/* system menu bar */
.menubar { flex: none; height: 42px; margin-bottom: 2px; padding-bottom: 2px; display: flex; justify-content: space-between; background: #abb4c2; font-size: 27px; color: #050510; }
.menus { display: flex; align-items: center; gap: 39px; padding-left: 40px; white-space: nowrap; }
.app { font-weight: 700; }
.status { display: flex; align-items: center; gap: 24px; }
.battery { display: flex; align-items: center; gap: 8px; font-size: 24px; }
.clock { width: 104px; padding-left: 16px; overflow: hidden; white-space: nowrap; }

/* window */
.window { flex: 1; min-height: 0; display: flex; flex-direction: column; border-right: 2px solid #a8a8a8; border-radius: 10px 10px 0 0; overflow: hidden; background: #d0d0d0; }
.chrome { flex: none; height: 108px; background: linear-gradient(#ebebeb, #dadada); border-bottom: 2px solid #a0a0a0; }
.titlebar { height: 44px; display: grid; grid-template-columns: 1fr auto 1fr; align-items: center; }
.lights { display: flex; gap: 16px; padding-left: 14px; }
.light { width: 24px; height: 24px; border-radius: 50%; border: 1px solid #dfa030; background: #fdbc40; }
.light.close { background: radial-gradient(#4d0000 0 4px, #fc605b 5px); border-color: #de4643; }
.light.full { background: #34c84a; border-color: #28a73a; }
.title { display: flex; align-items: center; gap: 12px; font-size: 26px; color: #4c4c4c; }
.toolbar { height: 62px; display: flex; align-items: center; }
.tg, .fg { height: 50px; display: flex; align-items: center; gap: 18px; padding: 0 16px 0 12px; background: repeating-linear-gradient(#999 0 2px, transparent 2px 6px) no-repeat right top / 2px 50px; border-right: 2px solid transparent; background-origin: border-box; }
.tg.first { padding-left: 8px; }
.tg.tight { gap: 16px; }
.tg.near { padding-left: 5px; }
.tg.last, .fg.last { background: none; }
.split { gap: 10px; }
.pressed { width: 52px; height: 52px; border: 2px solid #777; border-radius: 8px; background: #b4b4b4; box-shadow: inset 0 2px 5px #777; }
.combo { display: flex; height: 40px; background: #fff; border: 2px solid #a6a6a6; }
.combo select { flex: 1; padding-left: 5px; font-size: 21px; }
.drop { flex: none; width: 30px; display: flex; align-items: center; justify-content: center; border-left: 2px solid #a6a6a6; background: linear-gradient(#fff, #e2e2e2); }
.old { height: 38px; }
.old select { padding-left: 3px; }
.old .drop { background: linear-gradient(#c0c0c0, #d8d8d8 50%, #b4b4b4 50%, #ddd); border-color: #aaa; }
.old .caret { border-width: 10px 6px 0; border-top-color: #555; }
.zoom { width: 100px; }
.font { width: 206px; }
.size { width: 86px; }
.name { width: 232px; }
.pts { width: 95px; }
.num { width: 310px; }
.search { margin-left: auto; margin-right: 12px; width: 528px; height: 42px; display: flex; border: 2px solid #777; border-radius: 21px; background: linear-gradient(#f8f8f8, #d2d2d2); overflow: hidden; }
.lens { flex: none; width: 62px; padding-left: 6px; }
.field { flex: 1; min-width: 0; display: flex; align-items: center; padding: 0 6px 0 14px; background: #fff; border-radius: 19px; border: 2px solid #999; border-top: 0; border-bottom: 0; box-shadow: inset 0 2px 2px #bbb; }
.field input { flex: 1; font-size: 24px; outline: 0; }
.step { flex: none; width: 44px; }
.step + .step { border-left: 2px solid #aaa; }

.formatbar { flex: none; height: 64px; padding-top: 2px; display: flex; align-items: center; background: linear-gradient(#d6d6d6, #c9c9c9); border-bottom: 2px solid #a4aca4; }
.fg { padding: 0 14px; }
.fg.first { padding: 0 10px; gap: 14px; }
.fg > button { min-width: 40px; }
.glyph { font-family: "Liberation Serif", serif; font-size: 32px; line-height: 36px; color: #444; text-shadow: 0 1px #fff; }
.comma { font-size: 44px; padding-bottom: 14px; }
.pct { font-size: 34px; }
.sans { font-family: "Liberation Sans", sans-serif; }

/* ribbon tabs */
.tabs { flex: none; height: 40px; display: grid; grid-template-columns: 21px 160px 138px 136px 138px 166px 166px 114px 142px 1fr; background: linear-gradient(#cfdecc, #adc6ad); font-size: 23px; font-weight: 700; color: #222; }
.tabs a, .edge { display: flex; align-items: center; justify-content: center; gap: 20px; border-right: 2px solid #93b296; text-shadow: 0 2px #e2ece0; }
.tabs .on { background: linear-gradient(#eef5ee, #d3e4d5); }
.tools { display: flex; align-items: center; justify-content: flex-end; gap: 24px; padding-right: 8px; background: linear-gradient(#93a693, #93a693) no-repeat right 114px center / 2px 32px; }
.gear { gap: 4px; }
.ribbon { flex: none; padding: 2px 5px 3px 3px; background: #bddac5; border-top: 2px solid #d9eadd; }
.groups { height: 143px; display: grid; grid-template-columns: 253px 478px 468px 334px 414px 316px 190px; background: linear-gradient(#e9e9e9, #d9d9d9); border: 2px solid #a3bba6; border-radius: 8px; }
.rg { background: repeating-linear-gradient(#999 0 2px, transparent 2px 6px) no-repeat right 10px / 2px 124px; padding-right: 2px; }
.rg h2 { height: 26px; font-size: 18px; line-height: 28px; text-align: center; padding-right: 6px; background: radial-gradient(ellipse 50% 60% at 50% 100%, #cfcfcf, transparent); border-bottom: 1px solid #ccc; }
.body { padding: 6px 10px 0; display: flex; flex-direction: column; gap: 11px; width: 100%; }
.line { height: 43px; display: flex; align-items: center; gap: 10px; }
.narrow { gap: 3px; }
.narrow, .spread { width: 452px; max-width: 100%; }
.spread { justify-content: space-between; }
.push { margin-left: auto; }
.seg { display: flex; height: 43px; border: 2px solid #b2b2b2; border-radius: 6px; background: linear-gradient(#f0f0f0, #c9c9c9); }
.seg button { width: 53px; border-right: 2px solid #b2b2b2; box-sizing: content-box; }
.seg button:last-child { border-right: 0; }
.seg .thin { width: 19px; }
.seg .wide { width: 61px; }
.seg .ul { width: 71px; gap: 8px; align-items: center; }
.ul svg { align-self: flex-end; margin-bottom: 4px; }
.seg .abc { width: 72px; gap: 4px; font-size: 28px; }
.seg .comma { height: 25px; align-self: flex-start; }
.down { background: linear-gradient(#b4b4b4, #959595); }
.row { height: 43px; padding-left: 4px; gap: 10px; justify-content: flex-start; white-space: nowrap; }
.row .caret { margin-left: 6px; }
.off { color: #777; }
.big { flex-direction: column; justify-content: flex-start; line-height: 22px; }
.pic { height: 64px; display: flex; align-items: center; gap: 18px; margin-bottom: 12px; }
.side { display: flex; }
.edit { padding: 6px 0 0 16px; gap: 18px; }
.stack { display: flex; flex-direction: column; gap: 11px; }
.edit .row { width: 120px; }
.edit .row .caret { margin-left: auto; }
.styles { padding: 4px 8px 0 8px; justify-content: space-between; }
.two .pic { margin-bottom: 0; padding-left: 4px; gap: 6px; height: 66px; }
.gallery { flex: none; width: 280px; height: 108px; display: flex; align-items: center; gap: 18px; padding-left: 54px; background: #f4f4f4; border: 2px solid #b2b2b2; }
.cards { display: flex; flex-direction: column; gap: 8px; }
.card { width: 162px; height: 42px; padding-left: 6px; justify-content: flex-start; background: #fff; border: 3px solid #6dc26d; outline: 2px solid #c4ecc2; outline-offset: -1px; color: #222; font-size: 21px; }
.bad { background: #fdc7cc; border-color: #fdc7cc; outline: 0; color: #b0202c; }
.cells { display: grid; grid-template-columns: repeat(3, 100px); padding: 6px 4px 0; }
.cells .pic { gap: 8px; }
.theme { padding: 6px 0 0 16px; gap: 20px; }
.theme .pic { gap: 6px; }
.theme .row { gap: 6px; }
.theme .row .caret { margin-left: 0; }
.aa { font-family: "Liberation Serif", serif; font-size: 34px; font-weight: 700; color: #4f77bf; }

/* formula bar */
.formula { flex: none; height: 40px; display: flex; border-top: 2px solid #a0a0a0; border-bottom: 6px solid #e2e2e2; box-shadow: inset 0 -2px #a0a0a0; background: #e0e0e0; }
.cellref { width: 228px; text-align: center; background: #fff; font-size: 22px; }
.spin { width: 36px; border-left: 2px solid #a0a0a0; border-right: 2px solid #a0a0a0; background: #eee; }
.fbtns { width: 200px; display: flex; align-items: center; gap: 20px; padding-left: 22px; }
.fx { font-family: "Liberation Serif", serif; font-style: italic; font-weight: 700; font-size: 28px; color: #333; }
.expr { flex: 1; background: #fff; border-left: 2px solid #a0a0a0; }
.expand { width: 31px; background: #fff; border-left: 2px solid #a0a0a0; }

/* worksheet */
.sheet { flex: 1; min-height: 0; display: flex; border-top: 2px solid #a0a0a0; }
.grid { flex: 1; min-width: 0; overflow: hidden; background: #fff; }
table { width: 2898px; table-layout: fixed; border-collapse: separate; border-spacing: 0; font: 20px/26px "DejaVu Sans", sans-serif; }
.c0 { width: 56px; } .ca { width: 300px; } .cb { width: 412px; } .cc { width: 434px; } .cd { width: 828px; } .ce { width: 868px; }
th, td { padding: 0; height: 26px; }
th { font: 700 22px/22px "Noto Sans", sans-serif; padding: 0 2px 4px 0; color: #666; text-shadow: 0 1px #fff; background: linear-gradient(#ececec, #dedede); box-shadow: inset -2px 0 #999, inset 0 -2px #999; }
tbody th { vertical-align: bottom; background: #dadada; padding-right: 5px; box-shadow: inset -2px 0 #999, inset 0 -2px #999, inset 0 2px #ececec; }
.corner { padding: 4px 3px 0 0; }
.corner svg { margin-left: auto; }
th.sel { color: #fff; background: linear-gradient(#b8b8b8, #8c8c8c); text-shadow: 0 1px #555; box-shadow: inset -2px 0 #777, inset 0 -2px #888; }
td { padding-left: 4px; white-space: nowrap; overflow: hidden; box-shadow: inset -2px 0 #000, inset 0 -2px #000; }
td:nth-child(3) { background: #e2efda; }
.free td { box-shadow: inset 0 -2px #000; }
.free td:nth-child(3), .heads td:nth-child(3) { background: #fff; }
.spill td:nth-child(5) { box-shadow: inset 0 -2px #000; }
.heads td { height: 32px; text-align: center; padding: 0 2px 4px 0; }
.heads .large { font-size: 24px; padding-bottom: 0; }
td.active { position: relative; overflow: visible; box-shadow: none; }
.active::before { content: ""; position: absolute; inset: 0 0 0 -2px; border: 3px solid #1152c8; border-bottom-width: 4px; }
.active::after { content: ""; position: absolute; right: -5px; bottom: -5px; width: 12px; height: 12px; background: #7db4ee; border: 2px solid #1152c8; }
.vscroll { flex: none; width: 31px; display: flex; flex-direction: column; border-left: 2px solid #999; background: #fafafa; }
.splitter { height: 24px; background: linear-gradient(#aaa 0 2px, transparent 2px 6px, #aaa 6px 8px, transparent 8px) no-repeat center 8px / 18px 8px #fff; border-bottom: 2px solid #999; }
.track { flex: 1; padding: 2px 0 0 8px; }
.thumb { display: block; width: 16px; height: 36px; border-radius: 8px; background: #c1c1c1; }

/* red pointer arrows drawn over the window */
.notes { position: absolute; left: 0; top: 0; pointer-events: none; }
```
